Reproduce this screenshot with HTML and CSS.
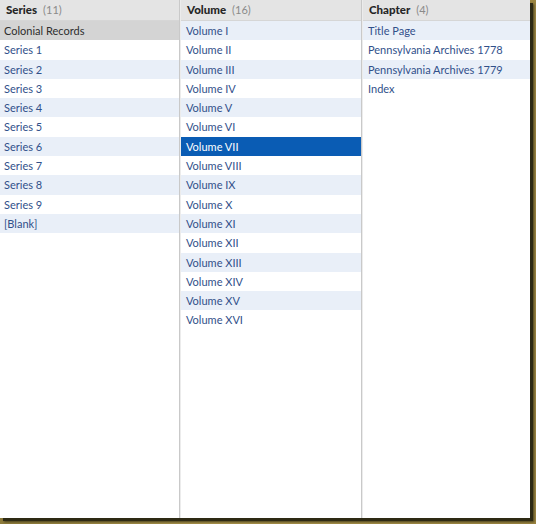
FILE: index.html
```html
<!DOCTYPE html>
<html>
<head>
<meta charset="utf-8">
<link rel="stylesheet" href="styles.css">
</head>
<body>
<div class="frame">
  <div class="browser">
    <div class="col col-series">
      <div class="head"><b>Series</b><span class="count">(11)</span></div>
      <ul class="list">
        <li class="sel-inactive">Colonial Records</li>
        <li>Series 1</li>
        <li>Series 2</li>
        <li>Series 3</li>
        <li>Series 4</li>
        <li>Series 5</li>
        <li>Series 6</li>
        <li>Series 7</li>
        <li>Series 8</li>
        <li>Series 9</li>
        <li>[Blank]</li>
      </ul>
    </div>
    <div class="col col-volume">
      <div class="head"><b>Volume</b><span class="count">(16)</span></div>
      <ul class="list">
        <li>Volume I</li>
        <li>Volume II</li>
        <li>Volume III</li>
        <li>Volume IV</li>
        <li>Volume V</li>
        <li>Volume VI</li>
        <li class="sel">Volume VII</li>
        <li>Volume VIII</li>
        <li>Volume IX</li>
        <li>Volume X</li>
        <li>Volume XI</li>
        <li>Volume XII</li>
        <li>Volume XIII</li>
        <li>Volume XIV</li>
        <li>Volume XV</li>
        <li>Volume XVI</li>
      </ul>
    </div>
    <div class="col col-chapter">
      <div class="head"><b>Chapter</b><span class="count">(4)</span></div>
      <ul class="list">
        <li>Title Page</li>
        <li>Pennsylvania Archives 1778</li>
        <li>Pennsylvania Archives 1779</li>
        <li>Index</li>
      </ul>
    </div>
  </div>
</div>
</body>
</html>
```

FILE: styles.css
```css
html, body {
  margin: 0;
  padding: 0;
}
body {
  width: 536px;
  height: 524px;
  background: linear-gradient(90deg, #8c7a3a 0%, #a8924a 40%, #9a8440 100%);
  overflow: hidden;
  font-family: Lato, "Liberation Sans", sans-serif;
  font-size: 11px;
}
.frame {
  width: 530px;
  height: 518px;
  background: #fff;
  box-shadow: 3px 3px 0 #2e2a14, 4px 4px 2px #4a4220;
}
.browser {
  display: grid;
  grid-template-columns: 180px 182px 168px;
  height: 100%;
}
.col {
  display: flex;
  flex-direction: column;
  background: #fff;
}
.col-series {
  border-right: 1px solid #c9c9c9;
}
.col-volume {
  border-left: 1px solid #ececec;
  border-right: 1px solid #c9c9c9;
}
.col-chapter {
  border-left: 1px solid #ececec;
}
.head {
  height: 21px;
  box-sizing: border-box;
  background: #e4e4e4;
  border-bottom: 1px solid #d6d6d6;
  padding: 2px 0 0 6px;
  color: #262626;
  font-size: 11.5px;
  line-height: 16px;
  white-space: nowrap;
}
.head b {
  font-weight: 900;
}
.count {
  color: #8a8a8a;
  margin-left: 6px;
  font-size: 11px;
}
.list {
  list-style: none;
  margin: 0;
  padding: 0;
}
.list li {
  height: 19.3px;
  line-height: 19.3px;
  padding-left: 5px;
  color: #31508a;
  white-space: nowrap;
}
.col-series .list li {
  padding-left: 4px;
}
.list li:nth-child(odd) {
  background: #e9eff8;
}
.list li.sel-inactive {
  background: #d4d4d4;
  color: #2e2e2e;
}
.list li.sel {
  background: #0a5cb4;
  color: #fff;
}
```
